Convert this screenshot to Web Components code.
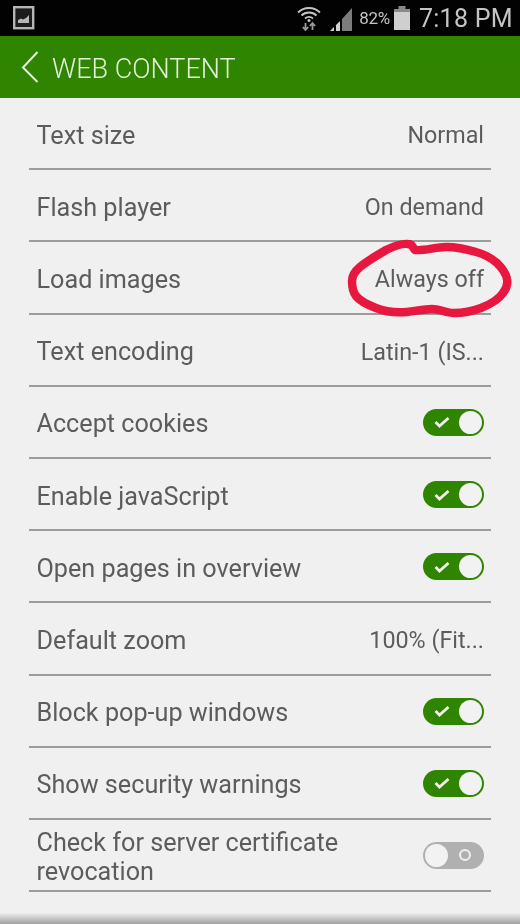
<!DOCTYPE html>
<html>
<head>
<meta charset="utf-8">
<title>Web content</title>
<style>
  html, body { margin: 0; padding: 0; background: #f0f0f0; }
  body { width: 520px; height: 924px; overflow: hidden; font-family: Roboto, "Liberation Sans", sans-serif; }
</style>
</head>
<body>
<phone-screen>
  <status-bar></status-bar>
  <app-header>WEB CONTENT</app-header>
  <settings-list>
    <settings-row label="Text size" value="Normal"></settings-row>
    <settings-row label="Flash player" value="On demand"></settings-row>
    <settings-row label="Load images" value="Always off"></settings-row>
    <settings-row label="Text encoding" value="Latin-1 (IS..."></settings-row>
    <settings-row label="Accept cookies"><toggle-switch on></toggle-switch></settings-row>
    <settings-row label="Enable javaScript"><toggle-switch on></toggle-switch></settings-row>
    <settings-row label="Open pages in overview"><toggle-switch on></toggle-switch></settings-row>
    <settings-row label="Default zoom" value="100% (Fit..."></settings-row>
    <settings-row label="Block pop-up windows"><toggle-switch on></toggle-switch></settings-row>
    <settings-row label="Show security warnings"><toggle-switch on></toggle-switch></settings-row>
    <settings-row label="Check for server certificate revocation"><toggle-switch></toggle-switch></settings-row>
  </settings-list>
  <red-circle></red-circle>
</phone-screen>

<script>
class PhoneScreen extends HTMLElement {
  connectedCallback() {
    this.attachShadow({ mode: 'open' });
    this.shadowRoot.innerHTML = `
      <style>
        :host {
          display: flex;
          flex-direction: column;
          position: relative;
          width: 520px;
          height: 924px;
          overflow: hidden;
          background: #f0f0f0;
          filter: blur(0.4px);
        }
        .edge {
          position: absolute;
          left: 0;
          right: 0;
          bottom: 0;
          height: 12px;
          background: linear-gradient(#f4f4f4, #a0a0a0);
        }
      </style>
      <slot></slot>
      <div class="edge"></div>
    `;
  }
}

class StatusBar extends HTMLElement {
  connectedCallback() {
    this.attachShadow({ mode: 'open' });
    this.shadowRoot.innerHTML = `
      <style>
        :host {
          display: flex;
          align-items: center;
          flex: none;
          height: 36px;
          padding: 0 7px 0 13px;
          background: #020202;
          color: #c4c4c4;
        }
        .pic { flex: none; margin-right: auto; }
        .wifi { flex: none; margin-right: 9px; }
        .signal { flex: none; margin-right: 6px; }
        .pct { font-size: 17px; letter-spacing: -0.3px; margin-right: 4px; }
        .batt { flex: none; margin-right: 9px; }
        .time { font-size: 25px; letter-spacing: 0.3px; white-space: nowrap; }
      </style>
      <svg class="pic" width="22" height="24" viewBox="0 0 22 24">
        <rect x="1.2" y="1.2" width="19" height="21" fill="#1c1c1c" stroke="#b5b5b5" stroke-width="2.4"/>
        <path d="M5 17v-3l3-1.500 2 1 3-1.500 3-3v8z" fill="#b5b5b5"/>
      </svg>
      <svg class="wifi" width="24" height="26" viewBox="0 0 24 26" fill="none" stroke="#c4c4c4">
        <path d="M1 7.500C7 1.500 17 1.500 23 7.500" stroke-width="1.800"/>
        <path d="M4.500 10.500C8.500 6.500 15.500 6.500 19.500 10.500" stroke-width="1.800"/>
        <path d="M8 13.500C10.500 11.500 13.500 11.500 16 13.500" stroke-width="1.800"/>
        <circle cx="12" cy="15.500" r="1.500" fill="#c4c4c4" stroke="none"/>
        <path d="M8.500 18v7M5.800 22l2.700 3 2.700-3M15.500 25v-7M12.800 21l2.700-3 2.700 3" stroke="#9a9a9a" stroke-width="1.800"/>
      </svg>
      <svg class="signal" width="23" height="25" viewBox="0 0 23 25">
        <path d="M0 25l4-4v4z" fill="#d0d0d0"/>
        <path d="M6 25v-6l4-4v10z" fill="#d0d0d0"/>
        <path d="M12 25V13l10-11v23z" fill="#7c7c7c"/>
      </svg>
      <span class="pct">82%</span>
      <svg class="batt" width="16" height="24" viewBox="0 0 16 24">
        <rect x="4.500" y="0" width="7" height="3" fill="#8a8a8a"/>
        <rect x="0" y="3" width="16" height="4" fill="#8a8a8a"/>
        <rect x="0" y="6" width="16" height="18" fill="#cfcfcf"/>
      </svg>
      <span class="time">7:18 PM</span>
    `;
  }
}

class AppHeader extends HTMLElement {
  connectedCallback() {
    this.attachShadow({ mode: 'open' });
    this.shadowRoot.innerHTML = `
      <style>
        :host {
          display: flex;
          align-items: center;
          flex: none;
          box-sizing: border-box;
          height: 62px;
          padding: 0 0 0 21px;
          gap: 13px;
          background: #2f8400;
          color: #e4f0da;
          font-size: 27px;
          font-weight: 300;
        }
        svg { flex: none; }
        .title { padding-top: 3px; }
      </style>
      <svg width="18" height="32" viewBox="0 0 18 32" fill="none" stroke="#e4f0da" stroke-width="2">
        <path d="M16.500 1L2 16.500 16.500 31"/>
      </svg>
      <span class="title"><slot></slot></span>
    `;
  }
}

class SettingsList extends HTMLElement {
  connectedCallback() {
    this.attachShadow({ mode: 'open' });
    this.shadowRoot.innerHTML = `
      <style>
        :host {
          display: flex;
          flex-direction: column;
          padding: 0 29px;
        }
      </style>
      <slot></slot>
    `;
  }
}

class SettingsRow extends HTMLElement {
  connectedCallback() {
    this.attachShadow({ mode: 'open' });
    const value = this.getAttribute('value');
    this.shadowRoot.innerHTML = `
      <style>
        :host {
          display: flex;
          align-items: center;
          justify-content: space-between;
          box-sizing: border-box;
          height: 72.200px;
          padding: 0 7px 0 7.500px;
          border-bottom: 2px solid #9c9c9c;
          color: #5c5c5c;
        }
        .label { font-size: 25.200px; line-height: 29px; max-width: 340px; padding-top: 4px; }
        .value { font-size: 23.300px; white-space: nowrap; padding-top: 4px; }
      </style>
      <span class="label">${this.getAttribute('label')}</span>
      ${value ? `<span class="value">${value}</span>` : '<slot></slot>'}
    `;
  }
}

class ToggleSwitch extends HTMLElement {
  connectedCallback() {
    this.attachShadow({ mode: 'open' });
    const on = this.hasAttribute('on');
    this.shadowRoot.innerHTML = `
      <style>
        :host {
          display: flex;
          align-items: center;
          justify-content: space-between;
          box-sizing: border-box;
          width: 61px;
          height: 27px;
          margin-top: 1px;
          border-radius: 14px;
          background: ${on ? '#2f8400' : '#b0b0b0'};
          flex-direction: ${on ? 'row' : 'row-reverse'};
        }
        svg { flex: none; margin: ${on ? '0 0 0 11px' : '0 12px 0 0'}; }
        .knob {
          flex: none;
          box-sizing: border-box;
          width: 23px;
          height: 23px;
          margin: 0 2px;
          border-radius: 50%;
          background: #f2f2f2;
        }
      </style>
      ${on
        ? `<svg width="16" height="12" viewBox="0 0 16 12" fill="none" stroke="#f0f0f0" stroke-width="2.800"><path d="M1.500 6l4 4 9-8"/></svg>`
        : `<svg width="14" height="14" viewBox="0 0 14 14" fill="none" stroke="#f0f0f0" stroke-width="2"><circle cx="7" cy="7" r="5"/></svg>`}
      <div class="knob"></div>
    `;
  }
}

// hand-drawn marker annotation over the "Load images" row
class RedCircle extends HTMLElement {
  connectedCallback() {
    this.attachShadow({ mode: 'open' });
    this.shadowRoot.innerHTML = `
      <style>
        :host { position: absolute; left: 340px; top: 232px; width: 180px; height: 90px; }
        svg { display: block; }
      </style>
      <svg width="180" height="90" viewBox="0 0 180 90" fill="none" stroke="#e8173f" stroke-width="8.500" stroke-linecap="round" stroke-linejoin="round">
        <path d="M75 18C72 15 73 12 68 12C60 11 52 15 46 18C36 24 27 29 20 35C14 40 12 44 12 49C12 55 13 60 16 64C20 69 28 73 36 76C46 80 56 81 67 80C76 79 84 77 92 77C100 77 106 81 114 81C124 81 133 79 141 76C151 72 159 67 163 61C167 56 168 52 167 47C166 41 162 36 157 31C151 26 144 22 136 20C126 17 116 15 106 15C96 15 84 19 75 18Z"/>
      </svg>
    `;
  }
}

customElements.define('phone-screen', PhoneScreen);
customElements.define('status-bar', StatusBar);
customElements.define('app-header', AppHeader);
customElements.define('settings-list', SettingsList);
customElements.define('settings-row', SettingsRow);
customElements.define('toggle-switch', ToggleSwitch);
customElements.define('red-circle', RedCircle);
</script>
</body>
</html>
